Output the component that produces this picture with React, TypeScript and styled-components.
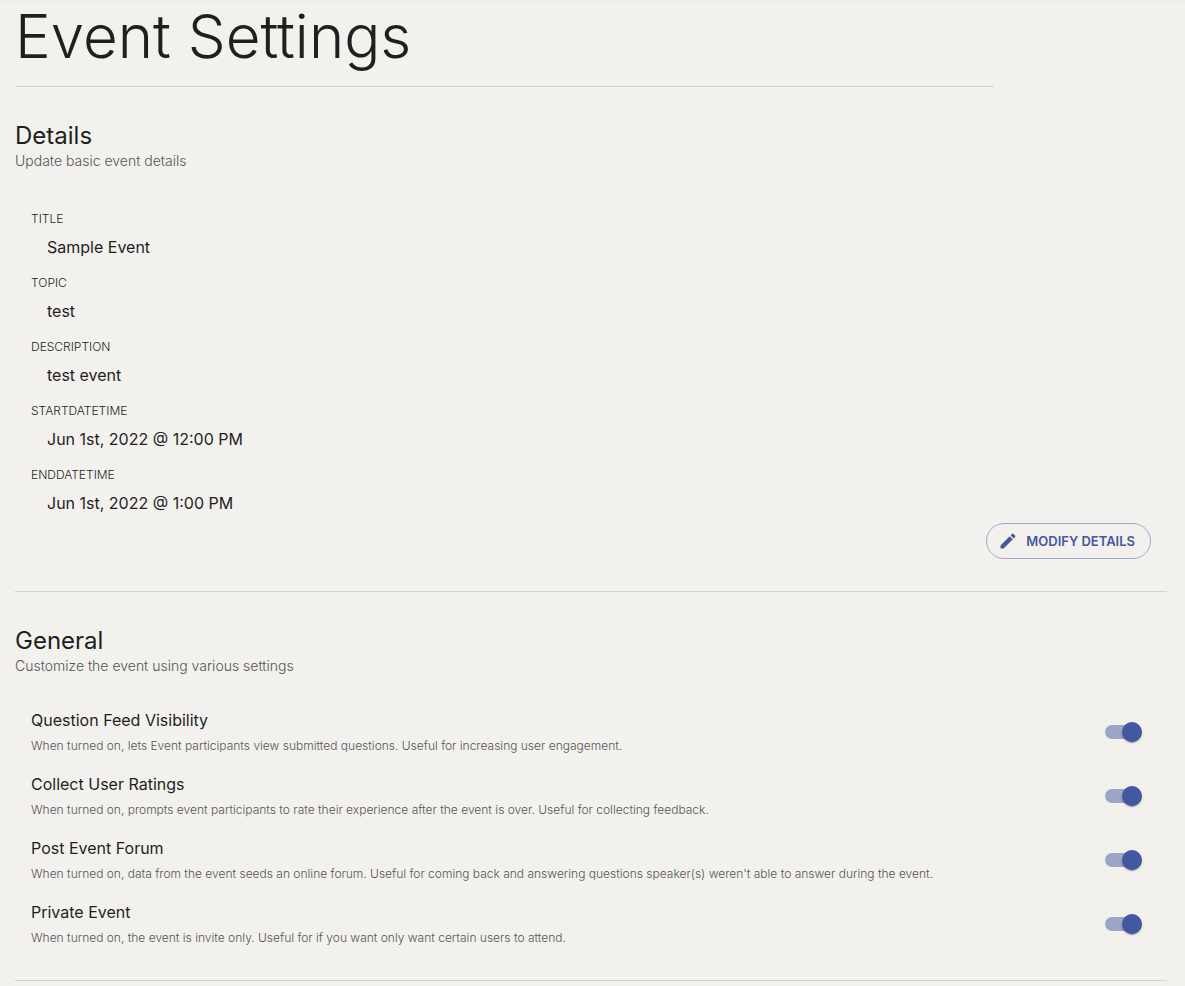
import React from "react";
import styled, { createGlobalStyle } from "styled-components";

const GlobalStyle = createGlobalStyle`
  *, *::before, *::after { box-sizing: border-box; }
  body {
    margin: 0;
    background: #f2f1ed;
    color: #1f1f1f;
    font-family: Inter, "Liberation Sans", sans-serif;
    -webkit-font-smoothing: antialiased;
  }
`;

const Page = styled.main`
  padding: 0 18px 0 15px;
  box-shadow: inset 0 3px 2px -2px rgba(0, 0, 0, 0.03);
`;

const PageHeader = styled.header`
  width: 85%;
  padding-bottom: 14px;
  border-bottom: 1px solid #d3d2ce;
`;

const PageTitle = styled.h1`
  margin: 0;
  font-size: 60px;
  line-height: 72px;
  font-weight: 300;
`;

const Section = styled.section`
  padding: 32px 0;
  border-bottom: 1px solid #d3d2ce;
`;

const SectionTitle = styled.h2`
  margin: 0;
  font-size: 24px;
  line-height: 34px;
  font-weight: 400;
`;

const SectionNote = styled.p`
  margin: 0;
  font-size: 14px;
  line-height: 16px;
  font-weight: 300;
  color: #555553;
`;

const DetailsList = styled.dl`
  display: grid;
  gap: 14px;
  margin: 40px 16px 8px;
`;

const DetailLabel = styled.dt`
  margin-bottom: 6px;
  font-size: 12px;
  line-height: 20px;
  font-weight: 300;
  text-transform: uppercase;
`;

const DetailValue = styled.dd`
  margin: 0 0 0 16px;
  font-size: 16px;
  line-height: 24px;
`;

const Actions = styled.div`
  display: flex;
  justify-content: flex-end;
  padding-right: 16px;
`;

const OutlinedButton = styled.button`
  display: flex;
  align-items: center;
  gap: 8px;
  height: 36px;
  padding: 0 15px 0 11px;
  border: 1px solid #a1a9cb;
  border-radius: 18px;
  background: transparent;
  color: #4457a0;
  font: 600 13px/24px Inter, "Liberation Sans", sans-serif;
  text-transform: uppercase;
  white-space: nowrap;
  cursor: pointer;
`;

const SettingsList = styled.div`
  display: grid;
  gap: 16px;
  margin: 34px 16px 0;
`;

const SettingRow = styled.label`
  display: flex;
  align-items: center;
  justify-content: space-between;
  gap: 24px;
  cursor: pointer;
`;

const SettingText = styled.span`
  display: grid;
  gap: 4px;
`;

const SettingName = styled.span`
  font-size: 16px;
  line-height: 24px;
`;

const SettingHint = styled.span`
  font-size: 12px;
  line-height: 20px;
  font-weight: 300;
  color: #555553;
`;

const Switch = styled.input`
  appearance: none;
  display: flex;
  align-items: center;
  flex: none;
  width: 34px;
  height: 14px;
  margin: 0 12px;
  border-radius: 7px;
  background: #b5b4b1;
  cursor: pointer;

  &::before {
    content: "";
    flex: none;
    width: 20px;
    height: 20px;
    margin-left: -3px;
    border-radius: 50%;
    background: #fafafa;
    box-shadow: 0 2px 1px -1px rgba(0, 0, 0, 0.2),
      0 1px 1px rgba(0, 0, 0, 0.14), 0 1px 3px rgba(0, 0, 0, 0.12);
  }

  &:checked {
    background: #9ba5c7;
  }

  &:checked::before {
    margin-left: 17px;
    background: #4457a0;
  }
`;

const details = [
  { label: "title", value: "Sample Event" },
  { label: "topic", value: "test" },
  { label: "description", value: "test event" },
  { label: "startDateTime", value: "Jun 1st, 2022 @ 12:00 PM" },
  { label: "endDateTime", value: "Jun 1st, 2022 @ 1:00 PM" },
];

const settings = [
  {
    name: "Question Feed Visibility",
    hint: "When turned on, lets Event participants view submitted questions. Useful for increasing user engagement.",
  },
  {
    name: "Collect User Ratings",
    hint: "When turned on, prompts event participants to rate their experience after the event is over. Useful for collecting feedback.",
  },
  {
    name: "Post Event Forum",
    hint: "When turned on, data from the event seeds an online forum. Useful for coming back and answering questions speaker(s) weren't able to answer during the event.",
  },
  {
    name: "Private Event",
    hint: "When turned on, the event is invite only. Useful for if you want only want certain users to attend.",
  },
];

const PencilIcon = () => (
  <svg width="20" height="20" viewBox="0 0 24 24" fill="currentColor" aria-hidden="true">
    <path d="M3 17.25V21h3.75L17.81 9.94l-3.75-3.75L3 17.25zM20.71 7.04c.39-.39.39-1.02 0-1.41l-2.34-2.34a.9959.9959 0 0 0-1.41 0l-1.83 1.83 3.75 3.75 1.83-1.83z" />
  </svg>
);

export default function App() {
  return (
    <>
      <GlobalStyle />
      <Page>
        <PageHeader>
          <PageTitle>Event Settings</PageTitle>
        </PageHeader>

        <Section>
          <SectionTitle>Details</SectionTitle>
          <SectionNote>Update basic event details</SectionNote>
          <DetailsList>
            {details.map(({ label, value }) => (
              <div key={label}>
                <DetailLabel>{label}</DetailLabel>
                <DetailValue>{value}</DetailValue>
              </div>
            ))}
          </DetailsList>
          <Actions>
            <OutlinedButton type="button">
              <PencilIcon />
              Modify Details
            </OutlinedButton>
          </Actions>
        </Section>

        <Section>
          <SectionTitle>General</SectionTitle>
          <SectionNote>Customize the event using various settings</SectionNote>
          <SettingsList>
            {settings.map(({ name, hint }) => (
              <SettingRow key={name}>
                <SettingText>
                  <SettingName>{name}</SettingName>
                  <SettingHint>{hint}</SettingHint>
                </SettingText>
                <Switch type="checkbox" role="switch" defaultChecked />
              </SettingRow>
            ))}
          </SettingsList>
        </Section>
      </Page>
    </>
  );
}
